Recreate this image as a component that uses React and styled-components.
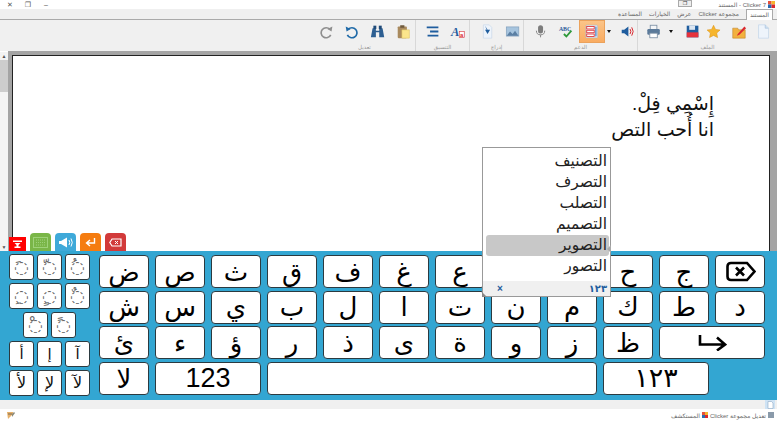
import React from "react";
import styled, { createGlobalStyle } from "styled-components";

const Global = createGlobalStyle`
  html, body { margin: 0; padding: 0; background: #fff; }
  body { width: 777px; height: 421px; overflow: hidden; font-family: "Liberation Sans", "DejaVu Sans", sans-serif; }
  * { box-sizing: border-box; }
`;
const Page = styled.div`width:777px;height:421px;display:flex;flex-direction:column;overflow:hidden;position:relative;`;
const Title = styled.div`height:9px;display:flex;align-items:center;padding:0 2px 0 1px;background:#fff;`;
const WinBtn = styled.span`width:18px;text-align:center;color:#555;font-size:7px;line-height:9px;`;
const Restore = styled.span`margin-left:623px;width:14px;height:7px;margin-top:-2px;background:#eee;border:1px solid #aaa;display:flex;align-items:center;justify-content:center;color:#333;font-size:5px;line-height:5px;`;
const TitleText = styled.span`margin-left:auto;margin-right:2px;font-size:6px;color:#666;`;
const TabBar = styled.div`height:11px;background:#f0f0f0;border-bottom:1px solid #aaa;display:flex;justify-content:flex-start;align-items:flex-end;padding-right:4px;gap:7px;font-size:6px;color:#666;`;
const Tab = styled.span`line-height:10px;height:10px;${p=>p.$active?"padding:0 3px;background:#fff;border:1px solid #aaa;border-bottom:0;height:11px;margin-bottom:-1px;":""}`;
const Ribbon = styled.div`height:31px;background:#f0f0f0;display:flex;justify-content:flex-end;`;
const Group = styled.div`width:${p=>p.$w}px;border-left:1px solid ${p=>p.$plain?"transparent":"#d8d8d8"};display:flex;flex-direction:column;align-items:center;`;
const Icons = styled.div`flex:1;display:flex;align-items:center;width:100%;padding-left:${p=>p.$pad||0}px;`;
const Slot = styled.div`width:${p=>p.$w}px;display:flex;align-items:center;justify-content:center;flex:none;`;
const Hot = styled.div`width:26px;height:23px;margin-top:-1px;flex:none;background:linear-gradient(#fbc488,#f9ac62);border:1px solid #eba25c;display:flex;align-items:center;justify-content:center;`;
const Caret = styled.div`width:0;height:0;border-left:2.5px solid transparent;border-right:2.5px solid transparent;border-top:3px solid #111;`;
const GroupLabel = styled.div`font-size:5.5px;color:#999;line-height:8px;height:8px;`;
const Body = styled.div`height:200px;display:flex;position:relative;`;
const Scroll = styled.div`width:8px;background:#f4f4f4;margin-top:1px;display:flex;flex-direction:column;align-items:center;`;
const ScrollBtn = styled.div`width:8px;height:8px;color:#555;font-size:5px;line-height:8px;text-align:center;background:#f3f3f3;`;
const Thumb = styled.div`width:8px;height:32px;background:#cdcdcd;`;
const ScrollGap = styled.div`flex:1;`;
const Frame = styled.div`flex:1;background:#a4a4a4;padding:4px 7px 0 4px;display:flex;`;
const Paper = styled.div`flex:1;background:#fff;border:1px solid #222;border-bottom:0;padding:35px 55px 0 0;font-size:19px;line-height:26px;text-align:right;direction:rtl;color:#111;`;
const KeyTabs = styled.div`position:absolute;left:9px;bottom:0;display:flex;gap:4px;align-items:flex-end;`;
const KeyTab = styled.div`width:${p=>p.$w}px;height:${p=>p.$h}px;background:${p=>p.$c};border-radius:${p=>p.$flat?"0":"4px 4px 0 0"};display:flex;align-items:center;justify-content:center;`;
const Panel = styled.div`height:149px;background:#33a6d2;display:flex;padding:3px 12px 0 9px;gap:9px;`;
const Small = styled.div`width:81px;display:flex;flex-direction:column;gap:3px;`;
const SmallRow = styled.div`display:flex;justify-content:center;gap:3px;`;
const SmallKey = styled.div`width:25px;height:26px;background:#fff;border:1px solid #2b3a40;border-radius:3px;display:flex;align-items:center;justify-content:center;font-family:"DejaVu Sans",sans-serif;font-size:${p=>p.$fs||14}px;color:${p=>p.$mark?"#666":"#111"};line-height:1;`;
const Keys = styled.div`display:grid;grid-template-columns:repeat(12,50px);grid-auto-rows:33px;gap:2.7px 6px;direction:ltr;margin-top:1px;`;
const Key = styled.div`grid-column:span ${p=>p.$span||1};background:#fff;border:1px solid #2b3a40;border-radius:4px;display:flex;align-items:center;justify-content:center;font-size:${p=>p.$fs||26}px;color:#000;line-height:1;`;
const Band = styled.div`height:9px;background:#f0f0f0;display:flex;justify-content:flex-end;padding-right:2px;`;
const Tile = styled.div`width:10px;height:9px;background:#cfe3f4;display:flex;align-items:center;justify-content:center;`;
const Status = styled.div`height:12px;background:#fff;font-size:6px;color:#666;display:flex;align-items:center;padding:0 3px 0 7px;`;
const StatusGroup = styled.div`margin-left:auto;display:flex;align-items:center;gap:2px;direction:rtl;`;
const Popup = styled.div`position:absolute;left:482px;top:147px;width:129px;height:150px;background:#fff;border:1px solid #999;display:flex;flex-direction:column;padding:3px 1px 0 3px;color:#222;`;
const Item = styled.div`height:21px;line-height:20px;font-size:15.5px;text-align:right;padding-right:2px;border-radius:3px;background:${p=>p.$sel?"#c8c8c8":"transparent"};flex:none;`;
const PopFoot = styled.div`height:15px;margin:auto -1px 0 -3px;background:#f0f0f0;display:flex;justify-content:space-between;align-items:center;padding:0 3px 0 14px;color:#1f5d9e;font-size:10px;font-weight:bold;flex:none;`;
const Grip = styled.div`position:absolute;left:-1px;bottom:-1px;width:0;height:0;border-left:5px solid #888;border-top:5px solid transparent;`;
const Handle = styled.div`position:absolute;right:-1px;top:97px;width:0;height:0;border-right:4px solid #aaa;border-top:4px solid transparent;border-bottom:4px solid transparent;`;
const Ic = styled.svg`display:block;flex:none;`;

const Svg = ({w=18,h=18,children}) => <Ic width={w} height={h} viewBox={`0 0 ${w} ${h}`}>{children}</Ic>;
const R = ({w=18,children}) => <Ic width={w*0.84} height={15} viewBox={`0 0 ${w} 18`}>{children}</Ic>;
const NewDoc = () => <R><path d="M3 1h8l4 4v12H3z" fill="#eef4fb" stroke="#c8d8ea"/><path d="M11 1v4h4" fill="#cfe0f2" stroke="#b0c8e0"/></R>;
const Folder = () => <R w={20}><path d="M2 5h6l1 2h8v10H2z" fill="#f2b13e" stroke="#b87a1c" strokeWidth=".6"/><path d="M8 12l8-9 2 2-8 8-3 1z" fill="#d9282f"/></R>;
const Star = () => <R><path d="M9 1.500l2.400 5 5.400.7-4 3.700 1 5.400L9 13.700l-4.800 2.600 1-5.400-4-3.700 5.400-.7z" fill="#f6b52c" stroke="#d98e10" strokeWidth=".6"/></R>;
const Save = () => <R><rect x="2" y="2" width="14" height="14" fill="#1f5d9e"/><rect x="5" y="2" width="7" height="5" fill="#dbe6f2"/><rect x="2" y="10" width="14" height="6" fill="#e5323c"/></R>;
const Printer = () => <R><rect x="5" y="1.500" width="8" height="5" fill="#f4f6f8" stroke="#7a8ea3"/><rect x="1.500" y="6" width="15" height="7" rx="1.500" fill="#5b7a9a"/><rect x="4.500" y="11" width="9" height="5.500" fill="#fff" stroke="#7a8ea3"/></R>;
const Speaker = () => <R><path d="M2 7h3l5-4v12l-5-4H2z" fill="#1f5d9e"/><path d="M12 6q2 3 0 6M14 4q3.500 5 0 10" fill="none" stroke="#d9282f" strokeWidth="1.200"/></R>;
const ListIc = () => <R w={16}><rect x="1" y="1.500" width="14" height="15" rx="1" fill="#fff" stroke="#8aa9c8" strokeWidth=".6"/><rect x="2" y="3" width="9" height="3" fill="#fff" stroke="#d9282f"/><rect x="2" y="7.500" width="9" height="3" fill="#fff" stroke="#d9282f"/><rect x="2" y="12" width="9" height="3" fill="#fff" stroke="#d9282f"/><path d="M13 3v12" stroke="#6a9ad0" strokeWidth="2"/></R>;
const Abc = () => <R w={20}><text x="1" y="8" fontSize="7" fontWeight="bold" fontFamily="Liberation Serif, serif" fill="#2a5a9a">ABC</text><path d="M7 12l3 3 6-7" fill="none" stroke="#2f9a3a" strokeWidth="2.200"/></R>;
const Mic = () => <R><rect x="6" y="1.500" width="6" height="10" rx="3" fill="#7d7d7d"/><path d="M4 8q0 5 5 5t5-5M9 13v3" fill="none" stroke="#8a8a8a" strokeWidth="1.200"/></R>;
const Pic = () => <R><rect x="1.500" y="3.500" width="15" height="11" fill="#a6c4de" stroke="#7f9dba" strokeWidth=".8"/><path d="M2 14l4-5 3 3 3-4 4 6z" fill="#5b7fa3"/></R>;
const Insert = () => <R><path d="M4 1h7l3 3v13H4z" fill="#eef4fb" stroke="#cfdcea"/><path d="M6 2l3 5h3l-3 5-3-5h2z" fill="#1f5d9e"/></R>;
const FontA = () => <R><text x="1" y="14" fontSize="15" fontWeight="bold" fontStyle="italic" fontFamily="Liberation Serif, serif" fill="#1f5d9e">A</text><rect x="11" y="9" width="6" height="7" fill="#fff" stroke="#d9282f" strokeWidth=".7"/><text x="12" y="15" fontSize="7" fontWeight="bold" fill="#d9282f">a</text></R>;
const Align = () => <R><path d="M2 4h14M6 9h10M3 14h13" stroke="#1f5d9e" strokeWidth="2.200"/></R>;
const Paste = () => <R><rect x="2" y="3" width="11" height="14" rx="1" fill="#a98a5e"/><rect x="5" y="1.500" width="5" height="3" fill="#6f5a3c"/><path d="M7 7h9v10H7z" fill="#fbe58c" stroke="#d8bd5a" strokeWidth=".6"/></R>;
const Binoc = () => <R><path d="M3 5h4v3h4V5h4l2 11h-6V10H7v6H1z" fill="#2d5f92"/><rect x="4" y="2" width="3.500" height="4" fill="#1f4a78"/><rect x="10.500" y="2" width="3.500" height="4" fill="#1f4a78"/></R>;
const Undo = () => <R><path d="M5 6.500A6 6 0 1 1 4 13" fill="none" stroke="#1f6aa8" strokeWidth="2"/><path d="M2 3l1 6 5-3z" fill="#1f6aa8"/></R>;
const Redo = () => <R><path d="M13 6.500A6 6 0 1 0 14 13" fill="none" stroke="#8f8f8f" strokeWidth="2"/><path d="M16 3l-1 6-5-3z" fill="#8f8f8f"/></R>;
const Logo = ({s=7}) => <Ic width={s} height={s} viewBox="0 0 8 8"><path d="M0 0h4v4H0z" fill="#e8523a"/><path d="M4 0h4v4H4z" fill="#f6b52c"/><path d="M0 4h4v4H0z" fill="#2a6ab0"/><path d="M4 4h4v4H4z" fill="#d9282f"/></Ic>;
const Pencil = () => <Svg w={8} h={8}><path d="M0 1h6v2L2 7 1 8z" fill="#e6b06a"/><path d="M1 3h4" stroke="#7a6a50"/><path d="M5 3l2-2 1 1-3 4z" fill="#8a8a7a"/></Svg>;
const SmallSheet = () => <Svg w={7} h={8}><path d="M1 .5h3.500L6 2v5.500H1z" fill="#fff" stroke="#8ea9c4" strokeWidth=".6"/></Svg>;
const Backspace = () => <Svg w={31} h={21}><path d="M6 2h16l7.500 8.500L22 19H6q-3.500 0-3.500-3.500v-10Q2.500 2 6 2z" fill="none" stroke="#000" strokeWidth="2.600"/><path d="M11 6.500l8 8M19 6.500l-8 8" stroke="#000" strokeWidth="2.600"/></Svg>;
const Enter = () => <Svg w={29} h={17}><path d="M2 1v9.500h25M19 3.500l8 7-8 6" fill="none" stroke="#000" strokeWidth="2.600"/></Svg>;
const TabDown = () => <Svg w={9} h={8}><path d="M0 .5h9v1.500H0zM1.500 3h6L5.500 5v1.500h2V8h-6V6.500h2V5z" fill="#fff"/></Svg>;
const TabGrid = () => <Svg w={15} h={11}><rect x=".5" y=".5" width="14" height="10" fill="none" stroke="#9ed27a"/><path d="M3 3h9M3 5.500h9M3 8h9" stroke="#9ed27a" strokeDasharray="1 1"/></Svg>;
const TabSpeak = () => <Svg w={15} h={11}><path d="M1 4h2l6-3.500v10L3 7H1z" fill="#fff"/><path d="M11 3q1.500 2.500 0 5M13 1.500q2.500 4 0 8" fill="none" stroke="#fff"/></Svg>;
const TabEnter = () => <Svg w={11} h={10}><path d="M9.500 1v5H2M5 3L1.500 6 5 9" fill="none" stroke="#fff" strokeWidth="1.400"/></Svg>;
const TabBack = () => <Svg w={13} h={9}><path d="M3 1h9v7H3L.8 4.500z" fill="none" stroke="#fff" strokeWidth="1.200"/><path d="M6 3l3 3M9 3L6 6" stroke="#fff"/></Svg>;

const r1 = ["ض","ص","ث","ق","ف","غ","ع","","","ح","ج"];
const r2 = "ش س ي ب ل ا ت ن م ك ط د".split(" ");
const r3 = "ئ ء ؤ ر ذ ى ة و ز ظ".split(" ");
const smallRows = [["\u064E","\u0651","\u064F"],["\u0650","\u064D","\u064C"],["\u0652","\u064B"]];
const alefRows = [["أ","إ","آ"],["لأ","لإ","لآ"]];
const words = ["التصنيف","التصرف","التصلب","التصميم","التصوير","التصور"];

export default function App(){return <Page><Global/>
<Title><WinBtn>✕</WinBtn><WinBtn>❐</WinBtn><WinBtn>–</WinBtn><Restore>❐</Restore><TitleText>المستند - Clicker 7</TitleText><Logo/></Title>
<TabBar dir="rtl"><Tab $active>المستند</Tab><Tab>مجموعة Clicker</Tab><Tab>عرض</Tab><Tab>الخيارات</Tab><Tab>المساعدة</Tab></TabBar>
<Ribbon>
  <Group $w={102} $plain><Icons><Slot $w={25}><Redo/></Slot><Slot $w={26}><Undo/></Slot><Slot $w={26}><Binoc/></Slot><Slot $w={25}><Paste/></Slot></Icons><GroupLabel>تعديل</GroupLabel></Group>
  <Group $w={54}><Icons $pad={4}><Slot $w={25}><Align/></Slot><Slot $w={25}><FontA/></Slot></Icons><GroupLabel>التنسيق</GroupLabel></Group>
  <Group $w={54}><Icons $pad={5}><Slot $w={26}><Insert/></Slot><Slot $w={24}><Pic/></Slot></Icons><GroupLabel>إدراج</GroupLabel></Group>
  <Group $w={114}><Icons $pad={4}><Slot $w={26}><Mic/></Slot><Slot $w={25}><Abc/></Slot><Hot><ListIc/></Hot><Slot $w={7}><Caret/></Slot><Slot $w={6}/><Slot $w={20}><Speaker/></Slot></Icons><GroupLabel>الدعم</GroupLabel></Group>
  <Group $w={140}><Icons $pad={3}><Slot $w={26}><Printer/></Slot><Slot $w={8}><Caret/></Slot><Slot $w={7}/><Slot $w={22}><Save/></Slot><Slot $w={20}><Star/></Slot><Slot $w={30}><Folder/></Slot><Slot $w={20}><NewDoc/></Slot></Icons><GroupLabel>الملف</GroupLabel></Group>
</Ribbon>
<Body>
  <Scroll><ScrollBtn>▲</ScrollBtn><Thumb/><ScrollGap/><ScrollBtn>▼</ScrollBtn></Scroll>
  <Frame><Paper><div>إِسْمِي فِلْ.</div><div>انا أُحب التص</div></Paper></Frame>
  <KeyTabs>
    <KeyTab $w={17} $h={14} $c="#f00" $flat><TabDown/></KeyTab>
    <KeyTab $w={21} $h={18} $c="#7ab648"><TabGrid/></KeyTab>
    <KeyTab $w={21} $h={18} $c="#3fa9d9"><TabSpeak/></KeyTab>
    <KeyTab $w={21} $h={18} $c="#f57c10"><TabEnter/></KeyTab>
    <KeyTab $w={21} $h={18} $c="#d23a3a"><TabBack/></KeyTab>
  </KeyTabs>
</Body>
<Panel>
  <Small>
    {smallRows.map((row,i)=><SmallRow key={i}>{row.map(c=><SmallKey key={c} $mark $fs={17}>{"\u25CC"+c}</SmallKey>)}</SmallRow>)}
    {alefRows.map((row,i)=><SmallRow key={i}>{row.map(c=><SmallKey key={c} $fs={i===0?15:16}>{c}</SmallKey>)}</SmallRow>)}
  </Small>
  <Keys>
    {r1.map((k,i)=><Key key={i}>{k}</Key>)}<Key><Backspace/></Key>
    {r2.map(k=><Key key={k}>{k}</Key>)}
    {r3.map(k=><Key key={k}>{k}</Key>)}<Key $span={2}><Enter/></Key>
    <Key>لا</Key><Key $span={2} $fs={27}>123</Key><Key $span={6}/><Key $span={2} $fs={27}>١٢٣</Key>
  </Keys>
</Panel>
<Band><Tile><SmallSheet/></Tile></Band>
<Status><Pencil/><StatusGroup><Svg w={6} h={6}><rect width="6" height="6" fill="#8a9aaa"/></Svg><span>تعديل مجموعة Clicker</span><Logo s={6}/><span>المستكشف</span></StatusGroup></Status>
<Popup dir="rtl">{words.map((t,i)=><Item key={t} $sel={i===4}>{t}</Item>)}<PopFoot><span>١٢٣</span><span>×</span></PopFoot><Grip/><Handle/></Popup>
</Page>}
